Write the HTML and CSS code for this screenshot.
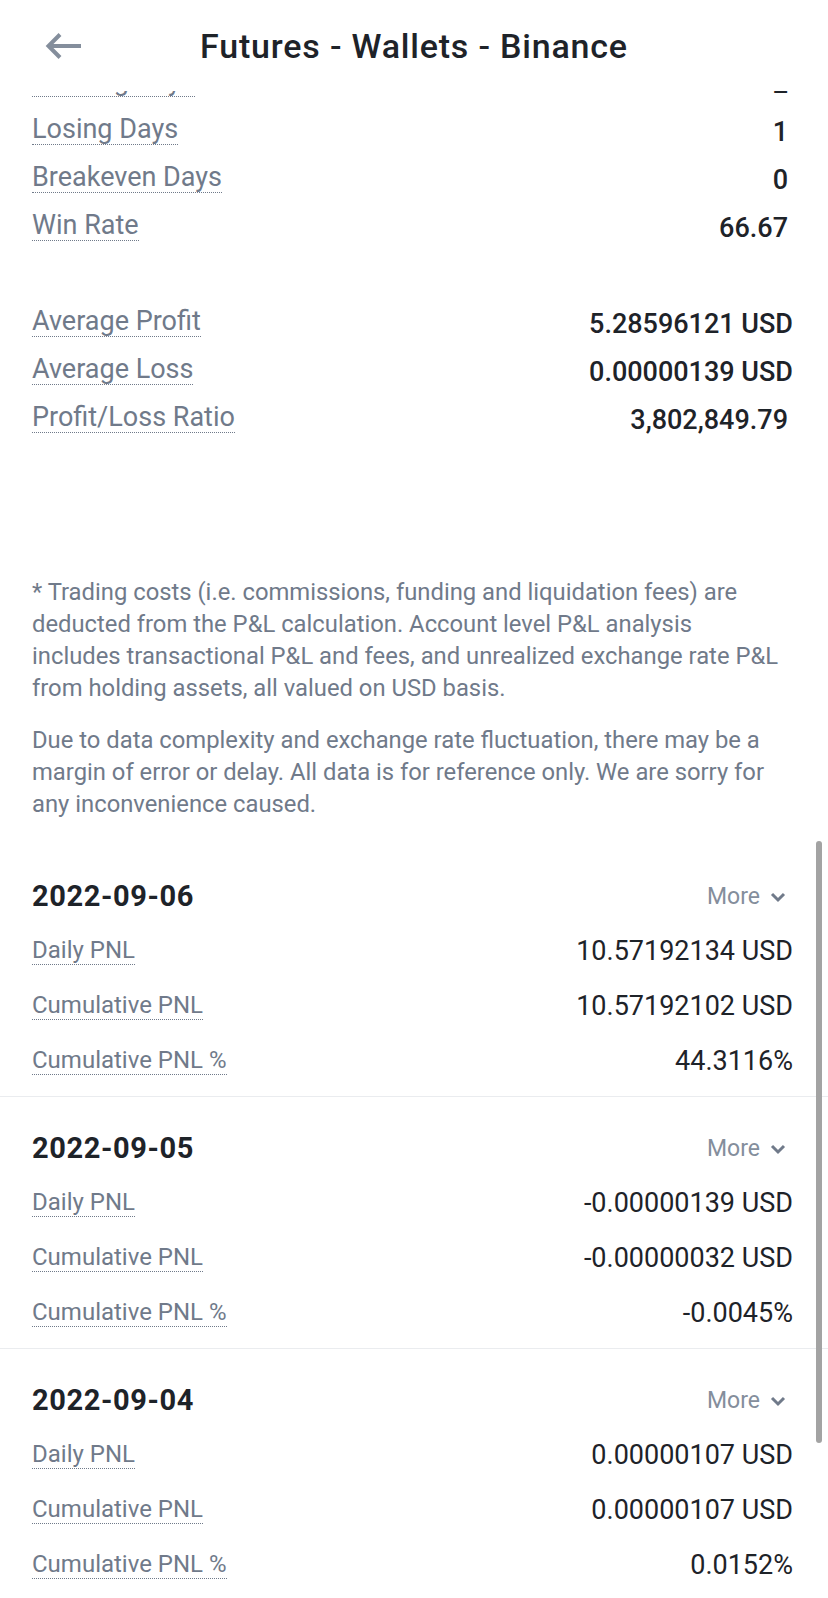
FILE: index.html
```html
<!DOCTYPE html>
<html lang="en">
<head>
<meta charset="utf-8">
<title>Futures - Wallets - Binance</title>
<link rel="stylesheet" href="styles.css">
</head>
<body>
<header class="topbar">
  <svg class="back" width="38" height="28" viewBox="0 0 38 28" aria-hidden="true">
    <path d="M36 14H4M15 2.5L3.5 14L15 25.5" fill="none" stroke="#848E9C" stroke-width="4" stroke-linecap="butt" stroke-linejoin="miter"/>
  </svg>
  <h1 class="title">Futures - Wallets - Binance</h1>
</header>

<main class="page">
  <section class="stats">
    <div class="stat"><span class="label">Winning Days</span><span class="val plain">2</span></div>
    <div class="stat"><span class="label">Losing Days</span><span class="val plain">1</span></div>
    <div class="stat"><span class="label">Breakeven Days</span><span class="val plain">0</span></div>
    <div class="stat"><span class="label">Win Rate</span><span class="val plain">66.67</span></div>
  </section>

  <section class="stats stats-gap">
    <div class="stat"><span class="label">Average Profit</span><span class="val">5.28596121 USD</span></div>
    <div class="stat"><span class="label">Average Loss</span><span class="val">0.00000139 USD</span></div>
    <div class="stat"><span class="label">Profit/Loss Ratio</span><span class="val plain">3,802,849.79</span></div>
  </section>

  <section class="notes">
    <p>* Trading costs (i.e. commissions, funding and liquidation fees) are<br>deducted from the P&amp;L calculation. Account level P&amp;L analysis<br>includes transactional P&amp;L and fees, and unrealized exchange rate P&amp;L<br>from holding assets, all valued on USD basis.</p>
    <p>Due to data complexity and exchange rate fluctuation, there may be a<br>margin of error or delay. All data is for reference only. We are sorry for<br>any inconvenience caused.</p>
  </section>

  <section class="day">
    <div class="day-head"><span class="date">2022-09-06</span><span class="more">More <svg class="chev" width="18" height="12" viewBox="0 0 18 12"><path d="M3 3L9 9L15 3" fill="none" stroke="#707A8A" stroke-width="3"/></svg></span></div>
    <div class="pnl"><span class="plabel">Daily PNL</span><span class="pval">10.57192134 USD</span></div>
    <div class="pnl"><span class="plabel">Cumulative PNL</span><span class="pval">10.57192102 USD</span></div>
    <div class="pnl"><span class="plabel">Cumulative PNL %</span><span class="pval">44.3116%</span></div>
  </section>

  <section class="day">
    <div class="day-head"><span class="date">2022-09-05</span><span class="more">More <svg class="chev" width="18" height="12" viewBox="0 0 18 12"><path d="M3 3L9 9L15 3" fill="none" stroke="#707A8A" stroke-width="3"/></svg></span></div>
    <div class="pnl"><span class="plabel">Daily PNL</span><span class="pval">-0.00000139 USD</span></div>
    <div class="pnl"><span class="plabel">Cumulative PNL</span><span class="pval">-0.00000032 USD</span></div>
    <div class="pnl"><span class="plabel">Cumulative PNL %</span><span class="pval">-0.0045%</span></div>
  </section>

  <section class="day">
    <div class="day-head"><span class="date">2022-09-04</span><span class="more">More <svg class="chev" width="18" height="12" viewBox="0 0 18 12"><path d="M3 3L9 9L15 3" fill="none" stroke="#707A8A" stroke-width="3"/></svg></span></div>
    <div class="pnl"><span class="plabel">Daily PNL</span><span class="pval">0.00000107 USD</span></div>
    <div class="pnl"><span class="plabel">Cumulative PNL</span><span class="pval">0.00000107 USD</span></div>
    <div class="pnl"><span class="plabel">Cumulative PNL %</span><span class="pval">0.0152%</span></div>
  </section>
</main>

<div class="scrollbar"></div>
</body>
</html>
```

FILE: styles.css
```css
html, body {
  margin: 0;
  padding: 0;
  height: 100%;
  overflow: hidden;
  background: #ffffff;
}

body {
  font-family: Roboto, "Liberation Sans", sans-serif;
  color: #1E2329;
}

.topbar {
  position: fixed;
  top: 0;
  left: 0;
  right: 0;
  height: 91px;
  background: #ffffff;
  z-index: 5;
}

.back {
  position: absolute;
  left: 45px;
  top: 32px;
}

.title {
  margin: 0;
  padding-top: 26px;
  text-align: center;
  font-size: 34px;
  font-weight: 500;
  letter-spacing: 0.8px;
  line-height: 40px;
  color: #1E2329;
}

.page {
  padding-top: 57px;
}

.stats {
  padding: 0 35px 0 32px;
}

.stats-gap {
  margin-top: 48px;
}

.stat {
  height: 48px;
  display: flex;
  align-items: center;
  justify-content: space-between;
}

.label {
  display: inline-block;
  font-size: 27px;
  line-height: 30px;
  color: #707A8A;
  border-bottom: 1px dotted #707A8A;
}

.val {
  font-size: 27px;
  line-height: 30px;
  font-weight: 500;
  color: #1E2329;
  padding-top: 5px;
}

.val.plain {
  margin-right: 5px;
}

.notes {
  margin-top: 135px;
  padding: 0 32px;
}

.notes p {
  margin: 0;
  font-size: 23.8px;
  line-height: 32px;
  color: #707A8A;
  white-space: nowrap;
}

.notes p + p {
  margin-top: 20px;
}

.day {
  margin-top: 25px;
  padding: 24px 35px 8px 32px;
  border-bottom: 1px solid #EAECEF;
}

.day + .day {
  margin-top: 0;
}

.day-head {
  height: 54px;
  display: flex;
  align-items: center;
  justify-content: space-between;
}

.date {
  font-size: 29px;
  font-weight: 700;
  letter-spacing: 0.6px;
  color: #1E2329;
  line-height: 34px;
}

.more {
  display: flex;
  align-items: center;
  gap: 9px;
  font-size: 23px;
  color: #848E9C;
  margin-right: 6px;
}

.chev {
  display: block;
  margin-top: 1px;
}

.pnl {
  height: 55px;
  display: flex;
  align-items: center;
  justify-content: space-between;
}

.plabel {
  display: inline-block;
  font-size: 24px;
  line-height: 27px;
  color: #707A8A;
  border-bottom: 1px dotted #707A8A;
}

.pval {
  font-size: 27px;
  line-height: 30px;
  color: #1E2329;
}

.scrollbar {
  position: fixed;
  right: 6px;
  top: 841px;
  width: 6px;
  height: 602px;
  border-radius: 3px;
  background: #A3A3A3;
  z-index: 6;
}
```
